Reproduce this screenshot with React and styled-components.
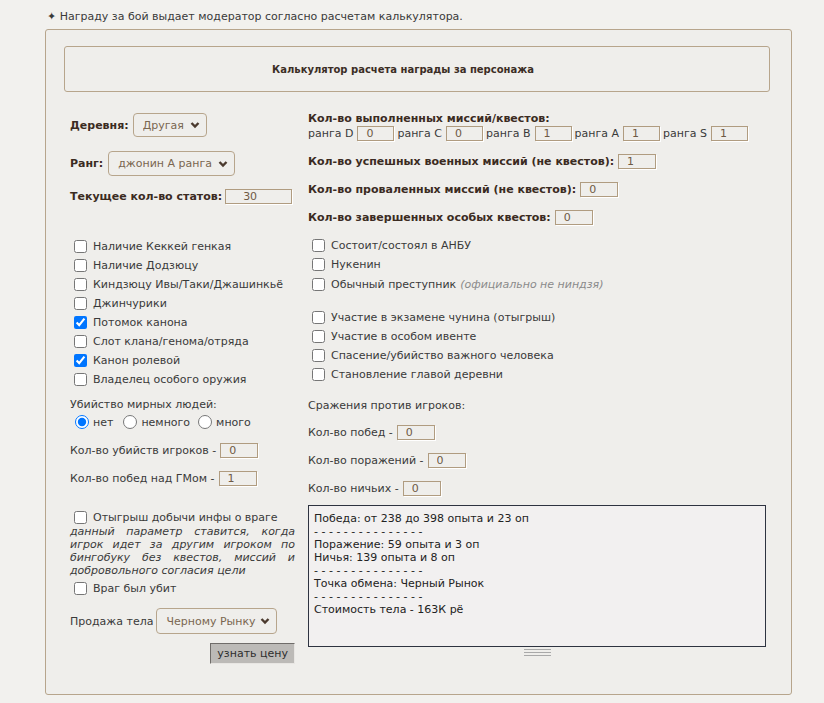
import React from "react";
import styled, { createGlobalStyle } from "styled-components";

const GlobalStyle = createGlobalStyle`
  body {
    margin: 0;
    background: #f2f1ee;
    font-family: "DejaVu Sans", Verdana, sans-serif;
    font-size: 11px;
    color: #3a3a3a;
  }
`;

const Page = styled.div`
  padding: 10px 0 8px 45px;
`;

const Note = styled.div`
  line-height: 13px;
  margin: 0 0 6px 2px;
  color: #3a3a3a;
`;

const Panel = styled.div`
  box-sizing: border-box;
  width: 747px;
  padding: 16px 21px 30px 18px;
  background: #efeeeb;
  border: 1px solid #b7a58c;
  border-radius: 3px;
`;

const Header = styled.div`
  box-sizing: border-box;
  height: 46px;
  border: 1px solid #b7a58c;
  border-radius: 3px;
  display: flex;
  align-items: center;
  justify-content: center;
  padding-right: 28px;
  font-size: 10px;
  font-weight: bold;
  color: #3b2d25;
`;

const Columns = styled.div`
  display: flex;
  gap: 13px;
  margin-top: 20px;
  padding-left: 6px;
`;

const Column = styled.div`
  width: ${(p) => p.$w}px;
  display: flex;
  flex-direction: column;
`;

const Row = styled.div`
  display: flex;
  align-items: center;
  height: ${(p) => p.$h || 16}px;
  margin-top: ${(p) => p.$mt || 0}px;
  justify-content: ${(p) => (p.$end ? "flex-end" : "flex-start")};
  white-space: nowrap;
`;

const Bold = styled.span`
  font-weight: bold;
  color: #3b2b22;
`;

const Title = styled.div`
  font-weight: bold;
  color: #3b2b22;
  line-height: 13px;
  margin-top: ${(p) => p.$mt || 0}px;
`;

const Label = styled.div`
  line-height: 13px;
  margin-top: ${(p) => p.$mt || 0}px;
  color: #3a3a3a;
`;

const Field = styled.input`
  box-sizing: border-box;
  width: ${(p) => p.$w || 38}px;
  height: 15px;
  margin-left: ${(p) => (p.$ml === undefined ? 4 : p.$ml)}px;
  margin-right: ${(p) => p.$mr || 0}px;
  padding: 0 0 0 ${(p) => p.$pl || 8}px;
  border: 1px solid #b09c80;
  box-shadow: 1px 1px 0 #ffffff;
  background: #efeeeb;
  color: #6e5a45;
  font: 11px "DejaVu Sans", Verdana, sans-serif;
  outline: none;
`;

const SelectWrap = styled.div`
  position: relative;
  margin-left: ${(p) => p.$ml || 5}px;
  width: ${(p) => p.$w}px;
  height: ${(p) => p.$h}px;
`;

const Select = styled.select`
  appearance: none;
  box-sizing: border-box;
  width: 100%;
  height: 100%;
  padding: 0 20px 0 9px;
  border: 1px solid #b7a58c;
  border-radius: 4px;
  background: #efeeeb;
  color: #7a6650;
  font: 11px "DejaVu Sans", Verdana, sans-serif;
`;

const Chevron = styled.svg`
  position: absolute;
  right: 7px;
  top: 50%;
  margin-top: -4px;
  pointer-events: none;
`;

const CheckList = styled.div`
  margin-top: ${(p) => p.$mt || 0}px;
`;

const CheckRow = styled.label`
  display: flex;
  align-items: center;
  height: ${(p) => p.$h || 19}px;
  margin-top: ${(p) => p.$mt || 0}px;
  color: #3a3a3a;
  white-space: nowrap;
`;

const Box = styled.input`
  width: 13px;
  height: 13px;
  margin: 0 6px 0 4px;
`;

const Muted = styled.i`
  color: #8a8a8a;
  margin-left: 4px;
`;

const RadioRow = styled.div`
  display: flex;
  align-items: center;
  height: 16px;
  margin-top: 3px;
`;

const Radio = styled.input`
  width: 14px;
  height: 14px;
  margin: 0 4px 0 ${(p) => p.$ml || 5}px;
`;

const Hint = styled.div`
  font-style: italic;
  line-height: 13px;
  text-align: justify;
  color: #3a3a3a;
`;

const Button = styled.button`
  box-sizing: border-box;
  height: 21px;
  padding: 0 6px;
  border: 1px solid;
  border-color: #6f6c69 #e8e6e3 #e8e6e3 #6f6c69;
  background: #bcbab7;
  color: #2e2e2e;
  font: 11px "DejaVu Sans", Verdana, sans-serif;
`;

const Result = styled.textarea`
  box-sizing: border-box;
  width: 458px;
  height: 142px;
  margin-top: 9px;
  padding: 6px 5px 4px;
  border: 1px solid #2e3340;
  background: #f2f0f0;
  color: #222;
  font: 11px/13px "DejaVu Sans", Verdana, sans-serif;
  resize: none;
  outline: none;
`;

const Grip = styled.div`
  align-self: center;
  width: 27px;
  height: 5px;
  margin-top: 2px;
  border-top: 1px solid #a9a9a9;
  border-bottom: 1px solid #a9a9a9;
  position: relative;
  &::after {
    content: "";
    position: absolute;
    left: 0;
    right: 0;
    top: 2px;
    border-top: 1px solid #a9a9a9;
  }
`;

const Down = () => (
  <Chevron width="10" height="8" viewBox="0 0 10 8">
    <polyline points="1.5,2 5,5.5 8.5,2" fill="none" stroke="#4b3a2e" strokeWidth="2.4" />
  </Chevron>
);

const leftChecks = [
  ["Наличие Кеккей генкая", false],
  ["Наличие Додзюцу", false],
  ["Киндзюцу Ивы/Таки/Джашинкьё", false],
  ["Джинчурики", false],
  ["Потомок канона", true],
  ["Слот клана/генома/отряда", false],
  ["Канон ролевой", true],
  ["Владелец особого оружия", false],
];

const rightChecks2 = [
  "Участие в экзамене чунина (отыгрыш)",
  "Участие в особом ивенте",
  "Спасение/убийство важного человека",
  "Становление главой деревни",
];

const ranks = [
  ["D", "0"],
  ["C", "0"],
  ["B", "1"],
  ["A", "1"],
  ["S", "1"],
];

const resultText = `Победа: от 238 до 398 опыта и 23 оп
- - - - - - - - - - - - - - -
Поражение: 59 опыта и 3 оп
Ничья: 139 опыта и 8 оп
- - - - - - - - - - - - - - -
Точка обмена: Черный Рынок
- - - - - - - - - - - - - - -
Стоимость тела - 163К рё`;

export default function App() {
  return (
    <Page>
      <GlobalStyle />
      <Note>✦ Награду за бой выдает модератор согласно расчетам калькулятора.</Note>
      <Panel>
        <Header>Калькулятор расчета награды за персонажа</Header>
        <Columns>
          <Column $w={225}>
            <Row $h={24} $mt={1}>
              <Bold>Деревня:</Bold>
              <SelectWrap $w={74} $h={24} $ml={4}>
                <Select defaultValue="Другая">
                  <option>Другая</option>
                </Select>
                <Down />
              </SelectWrap>
            </Row>
            <Row $h={25} $mt={14}>
              <Bold>Ранг:</Bold>
              <SelectWrap $w={127} $h={25}>
                <Select defaultValue="джонин А ранга">
                  <option>джонин А ранга</option>
                </Select>
                <Down />
              </SelectWrap>
            </Row>
            <Row $mt={12}>
              <Bold>Текущее кол-во статов:</Bold>
              <Field $w={67} $pl={17} $ml={3} defaultValue="30" />
            </Row>
            <CheckList $mt={33}>
              {leftChecks.map(([t, c]) => (
                <CheckRow key={t}>
                  <Box type="checkbox" defaultChecked={c} />
                  {t}
                </CheckRow>
              ))}
            </CheckList>
            <Label $mt={9}>Убийство мирных людей:</Label>
            <RadioRow>
              <Radio type="radio" name="kill" defaultChecked />
              нет
              <Radio type="radio" name="kill" $ml={10} />
              немного
              <Radio type="radio" name="kill" $ml={8} />
              много
            </RadioRow>
            <Row $mt={12}>
              Кол-во убийств игроков -<Field defaultValue="0" />
            </Row>
            <Row $mt={12}>
              Кол-во побед над ГМом -<Field defaultValue="1" />
            </Row>
            <CheckRow $h={16} $mt={23}>
              <Box type="checkbox" />
              Отыгрыш добычи инфы о враге
            </CheckRow>
            <Hint>
              данный параметр ставится, когда игрок идет за другим игроком по
              бингобуку без квестов, миссий и добровольного согласия цели
            </Hint>
            <CheckRow $h={16} $mt={3}>
              <Box type="checkbox" />
              Враг был убит
            </CheckRow>
            <Row $h={26} $mt={12}>
              Продажа тела
              <SelectWrap $w={121} $h={26} $ml={3}>
                <Select defaultValue="Черному Рынку">
                  <option>Черному Рынку</option>
                </Select>
                <Down />
              </SelectWrap>
            </Row>
            <Row $h={21} $mt={9} $end>
              <Button>узнать цену</Button>
            </Row>
          </Column>

          <Column $w={458}>
            <Title>Кол-во выполненных миссий/квестов:</Title>
            <Row>
              {ranks.map(([r, v]) => (
                <React.Fragment key={r}>
                  ранга {r}
                  <Field $w={37} $mr={3} defaultValue={v} />
                </React.Fragment>
              ))}
            </Row>
            <Row $mt={12}>
              <Bold>Кол-во успешных военных миссий (не квестов):</Bold>
              <Field defaultValue="1" />
            </Row>
            <Row $mt={12}>
              <Bold>Кол-во проваленных миссий (не квестов):</Bold>
              <Field defaultValue="0" />
            </Row>
            <Row $mt={12}>
              <Bold>Кол-во завершенных особых квестов:</Bold>
              <Field defaultValue="0" />
            </Row>
            <CheckList $mt={11}>
              <CheckRow>
                <Box type="checkbox" />
                Состоит/состоял в АНБУ
              </CheckRow>
              <CheckRow>
                <Box type="checkbox" />
                Нукенин
              </CheckRow>
              <CheckRow $h={20}>
                <Box type="checkbox" />
                Обычный преступник<Muted>(официально не ниндзя)</Muted>
              </CheckRow>
            </CheckList>
            <CheckList $mt={14}>
              {rightChecks2.map((t) => (
                <CheckRow key={t}>
                  <Box type="checkbox" />
                  {t}
                </CheckRow>
              ))}
            </CheckList>
            <Label $mt={15}>Сражения против игроков:</Label>
            <Row $mt={12}>
              Кол-во побед -<Field defaultValue="0" />
            </Row>
            <Row $mt={12}>
              Кол-во поражений -<Field defaultValue="0" />
            </Row>
            <Row $mt={12}>
              Кол-во ничьих -<Field defaultValue="0" />
            </Row>
            <Result readOnly value={resultText} />
            <Grip />
          </Column>
        </Columns>
      </Panel>
    </Page>
  );
}
